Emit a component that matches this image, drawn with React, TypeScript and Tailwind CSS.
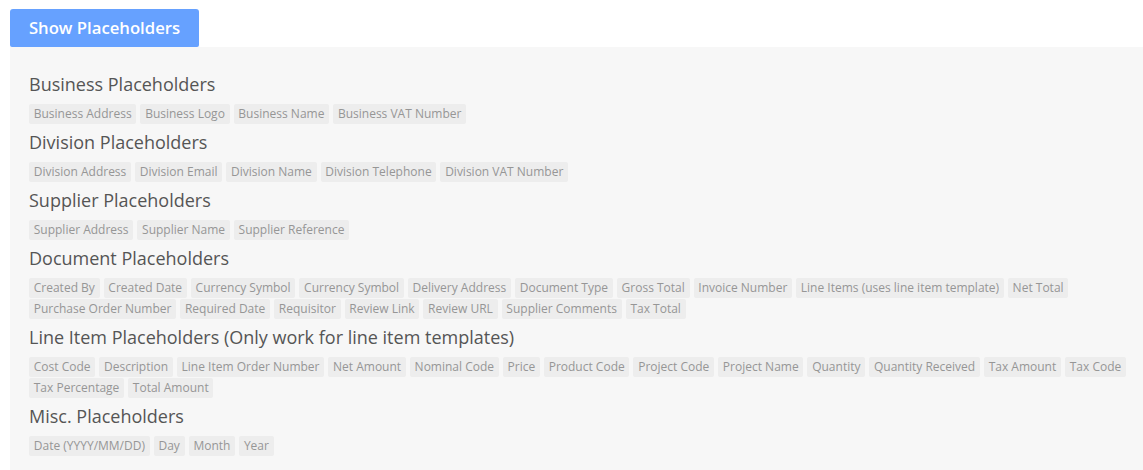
import React from "react";

type Group = { title: string; items: string[] };

const groups: Group[] = [
  {
    title: "Business Placeholders",
    items: ["Business Address", "Business Logo", "Business Name", "Business VAT Number"],
  },
  {
    title: "Division Placeholders",
    items: ["Division Address", "Division Email", "Division Name", "Division Telephone", "Division VAT Number"],
  },
  {
    title: "Supplier Placeholders",
    items: ["Supplier Address", "Supplier Name", "Supplier Reference"],
  },
  {
    title: "Document Placeholders",
    items: [
      "Created By",
      "Created Date",
      "Currency Symbol",
      "Currency Symbol",
      "Delivery Address",
      "Document Type",
      "Gross Total",
      "Invoice Number",
      "Line Items (uses line item template)",
      "Net Total",
      "Purchase Order Number",
      "Required Date",
      "Requisitor",
      "Review Link",
      "Review URL",
      "Supplier Comments",
      "Tax Total",
    ],
  },
  {
    title: "Line Item Placeholders (Only work for line item templates)",
    items: [
      "Cost Code",
      "Description",
      "Line Item Order Number",
      "Net Amount",
      "Nominal Code",
      "Price",
      "Product Code",
      "Project Code",
      "Project Name",
      "Quantity",
      "Quantity Received",
      "Tax Amount",
      "Tax Code",
      "Tax Percentage",
      "Total Amount",
    ],
  },
  {
    title: "Misc. Placeholders",
    items: ["Date (YYYY/MM/DD)", "Day", "Month", "Year"],
  },
];

const Tag = ({ label }: { label: string }) => (
  <span className="h-5 px-[4.75px] rounded-[2px] bg-[#ededed] text-[12px] leading-5 text-[#969696] whitespace-nowrap">
    {label}
  </span>
);

export default function App() {
  return (
    <div className="min-h-[470px] bg-white pt-[9px] pl-[10px] font-['Open_Sans',sans-serif]">
      <button className="h-[38px] w-[189px] rounded-t-[3px] rounded-b-[2px] bg-[#66a1ff] text-[16.7px] font-semibold text-white">
        Show Placeholders
      </button>
      <div className="bg-[#f7f7f7] pt-[19px] pb-[15px] pl-[19px] pr-[10px]">
        {groups.map((g) => (
          <div key={g.title}>
            <h3 className="mt-[5px] mb-[7px] h-[26px] text-[18px] leading-[26px] text-[#555]">{g.title}</h3>
            <div className="flex flex-wrap gap-x-1 gap-y-px">
              {g.items.map((it, i) => (
                <Tag key={`${it}-${i}`} label={it} />
              ))}
            </div>
          </div>
        ))}
      </div>
    </div>
  );
}
